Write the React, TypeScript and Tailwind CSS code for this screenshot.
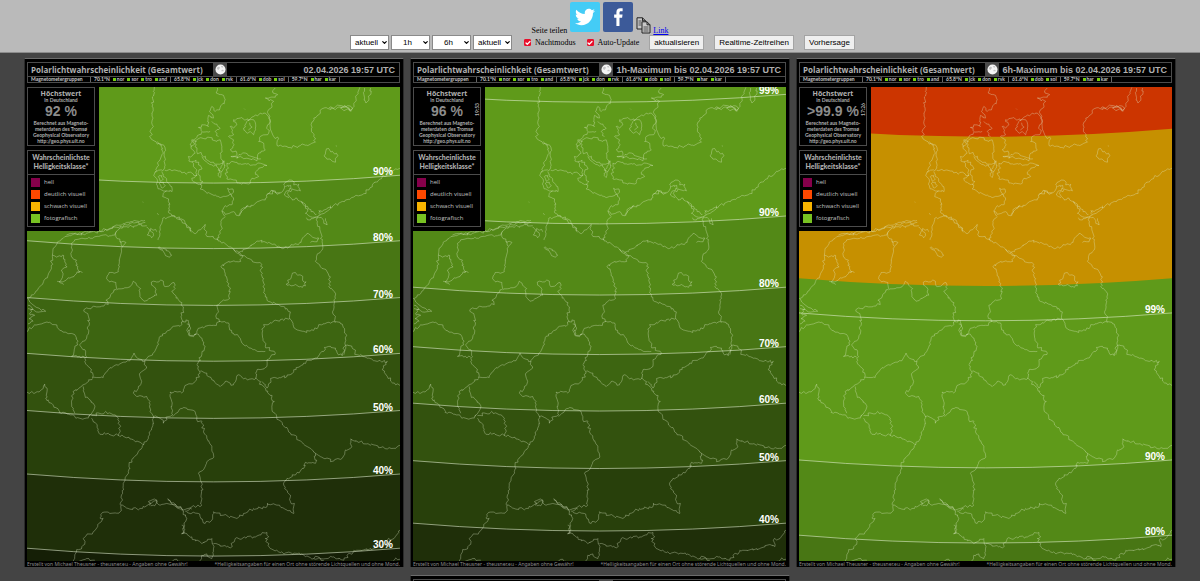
import { Check as CheckIcon, ChevronDown } from "lucide-react";

type Band = { edge: number; color: string; label?: string };
type MapData = { period: string; value: string; time?: string; top: string; bands: Band[] };

const LEFT = 22;
const TOP = 7;
const WIDTH = 1116;
const HEIGHT = 1419;
const SAG = 47;

const greens = {
  g90: "#5f9a1a",
  g80: "#538917",
  g70: "#487614",
  g60: "#3d6511",
  g50: "#33520e",
  g40: "#28400b",
  g30: "#1f2f09",
  g20: "#151f06",
};

const maps: MapData[] = [
  {
    period: "02.04.2026 19:57 UTC",
    value: "92 %",
    top: greens.g90,
    bands: [
      { edge: 271, color: greens.g80, label: "90%" },
      { edge: 467, color: greens.g70, label: "80%" },
      { edge: 637, color: greens.g60, label: "70%" },
      { edge: 804, color: greens.g50, label: "60%" },
      { edge: 975, color: greens.g40, label: "50%" },
      { edge: 1165, color: greens.g30, label: "40%" },
      { edge: 1387, color: greens.g20, label: "30%" },
    ],
  },
  {
    period: "1h-Maximum bis 02.04.2026 19:57 UTC",
    value: "96 %",
    time: "19:53",
    top: greens.g90,
    bands: [
      { edge: 29, color: greens.g90, label: "99%" },
      { edge: 393, color: greens.g80, label: "90%" },
      { edge: 606, color: greens.g70, label: "80%" },
      { edge: 784, color: greens.g60, label: "70%" },
      { edge: 953, color: greens.g50, label: "60%" },
      { edge: 1125, color: greens.g40, label: "50%" },
      { edge: 1312, color: greens.g30, label: "40%" },
    ],
  },
  {
    period: "6h-Maximum bis 02.04.2026 19:57 UTC",
    value: ">99.9 %",
    time: "17:26",
    top: "#cc3500",
    bands: [
      { edge: 132, color: "#c69000" },
      { edge: 579, color: greens.g90 },
      { edge: 683, color: greens.g90, label: "99%" },
      { edge: 1123, color: greens.g80, label: "90%" },
      { edge: 1348, color: greens.g70, label: "80%" },
    ],
  },
];

const north: string[] = [
  "403,7 400,20 398,60 399,100 396,130 391,158 402,168 412,178 430,180 434,200 436,225 434,250 428,258 415,256 405,262 404,275",
  "412,170 424,185 428,200 420,225 412,245 405,262",
  "434,256 460,256 485,264 498,268 512,262 530,272",
  "404,275 412,285 410,300 420,312 440,318 456,320 455,305 440,290 430,275 425,260",
  "415,275 425,272 430,282 420,288 415,275",
  "418,295 430,292 436,302 424,308 418,295",
  "440,318 430,325 428,335 440,340 445,350 448,365 445,380 455,392 465,398",
  "428,400 450,395 470,398 485,402 495,412 505,425 515,438 525,446 535,435 545,430 555,418 552,430 560,440 558,450 570,455 585,462 600,468 620,480 640,492 655,505 668,512",
  "468,400 484,405 494,415 504,428 514,441",
  "428,400 422,420 418,440 416,465",
  "380,425 390,435 382,450 395,458 400,445 392,430 410,440",
  "415,487 430,490 445,498 455,510 448,516 435,508 425,495 415,487",
  "375,406 350,408 320,412 290,420 270,430 235,438 200,440 160,448 130,460 112,472 100,490 98,510 95,540 85,570 65,600 45,625 25,640",
  "140,450 200,445 260,436 300,424 340,414 376,412",
  "380,420 350,422 320,425 300,428 290,438 285,450 270,452 250,450 225,455 190,460 165,464 155,475 158,495 155,515 170,525 168,540 180,560 165,570 145,578 130,590 112,588",
  "98,510 110,516 128,510 135,530 142,545 125,555 128,575 118,590 132,598",
  "175,562 188,562",
  "290,440 288,455 300,470 318,472 308,482",
  "300,470 308,485 302,510 298,535 290,562 268,562 260,580 270,590 288,592 290,610 275,625 258,645 265,658 230,665 200,668 192,678 205,690 208,720 202,750 200,760 180,778 195,793 200,813 195,828 210,848 218,878",
  "290,615 310,610 330,605 340,588 350,600 362,610 360,630 372,648 390,640 410,630 408,612 395,600 400,588 430,588 432,602 450,600 462,592 465,610 455,618 468,632 480,650 490,665 485,690 490,710 505,706 508,720 500,735 510,750 530,746",
  "592,10 588,25 610,32 613,50 600,68 585,80 575,65 568,80 578,90 580,100 565,92 562,110 565,125 545,120 535,128 548,142 570,140",
  "575,110 590,118 600,130 585,140 595,155",
  "545,142 530,158 515,165 510,180 518,195 525,205 505,215 510,230 520,245 530,255 530,272 515,280 525,292 545,300 540,312 560,325 585,330 600,338 625,332 640,322 638,312 622,310 630,325 640,345 632,360 615,362 605,378 615,388 640,380 655,392 665,378 685,365 705,355 735,345 738,330 765,318 770,328 788,318",
  "515,230 528,226 535,240 545,250 535,262 540,280 548,290 540,300",
  "512,185 524,178 518,168 530,170",
  "655,390 662,374 684,361",
  "740,328 752,316 780,322",
  "788,318 790,300 800,290 815,286 820,300 835,298 840,318 815,312 800,325 815,345 830,340 845,350 862,372 855,385 870,395 890,400 900,390 895,375",
  "795,305 810,300 812,312 798,318 792,330 806,338",
  "842,352 856,364 872,380 888,388",
  "900,388 925,375 930,362",
  "915,400 920,420 910,415 905,400 890,395 870,405 858,398",
  "895,382 920,370 960,352 1000,336 1030,326 1045,315 1055,300 1080,282 1105,265 1125,252 1138,250",
  "530,165 560,158 590,170 600,165 605,185 602,210 608,235 598,238 580,232 560,225 545,210 530,200 528,180 530,165",
  "612,228 612,250 600,278 595,270 602,250 612,228",
  "545,215 558,230 575,240 590,246 604,262",
  "640,150 625,155 640,165 638,185 630,195 650,205 650,220 632,215 660,215 680,220 710,228 712,210 735,195 730,175 715,170 720,155 745,145 742,120 750,105 735,85 720,85 700,95 685,108 660,100 640,105 650,120 640,130 630,125 640,150",
  "680,110 700,105 705,130 700,150 690,140 680,145 670,130 680,110",
  "688,114 694,128 684,136",
  "625,250 620,235 650,232 680,238 700,240 720,235 740,242 715,250 705,262 715,275 695,280 690,295 665,298 640,285 620,282 615,265 625,250",
  "655,212 668,204 684,212 698,216 722,222",
  "765,10 758,25 772,30 750,38 735,40 760,50 755,65 742,80 748,105 750,130 760,155 775,162 770,182 810,188 840,182 870,178 885,172 880,155 873,140 872,120 880,100 900,85 905,72 940,72 965,68 985,72 992,78 1000,60 1010,30 1018,8",
  "925,70 945,66 955,62 990,64 995,72 970,78 960,70 980,68 992,80",
  "1032,10 1030,30 1036,55 1045,40 1050,10",
  "918,192 950,210 945,232 912,215 918,192",
  "640,492 655,502 685,488 710,468 745,472 770,485 790,490 820,480 842,472 850,455 860,445 875,455 895,462 890,470 870,472",
  "605,378 615,395 602,410 606,430 600,445 592,465",
  "890,400 890,415 900,440 905,470 905,495 888,515 886,530 900,545 920,560 930,575 925,595 930,610 942,620 943,650 936,680 944,695 946,710",
  "668,512 655,530 620,532 602,545 615,565 620,590 630,610 628,640 600,652 590,660 595,680 588,695 598,710",
  "655,500 668,512 695,525 725,538 722,560 730,580 728,605 735,635 750,650 775,658 800,670 810,680 808,700 780,703 750,712 730,718 726,740 728,760 735,783",
  "808,700 820,725 835,735 850,738 880,735 895,718 920,712 945,710 960,715 972,730 975,745 974,770 970,808",
  "800,600 802,585 812,580 815,568 825,562 832,570 845,572 848,588 857,590 855,602 840,604 825,598 812,602 800,600",
  "22,638 30,650 60,670 78,678 50,680 25,670",
  "25,660 40,672 30,684 45,690 28,700 40,708 25,716",
  "22,738 45,718 65,716 85,712 105,718 120,735 145,745 165,748 175,768 165,788 155,813 195,816",
  "368,351 370,352",
  "411,385 416,389",
  "448,374 450,377",
  "672,72 674,74",
  "946,183 949,184",
];

const south: string[] = [
  "218,170 250,168 265,145 290,130 330,118 342,95 352,110 375,120 380,140 360,155 365,180 355,200 340,215 350,225 380,225 390,240 392,265 400,290 395,320 385,345 372,368 355,390 335,415 325,450 310,485 308,515 303,550",
  "22,212 45,215 65,205 75,188 82,200 78,230 100,250 125,275 160,280 168,290 205,290 210,280",
  "165,275 155,240 160,210 185,195 218,172",
  "190,195 195,220 220,245 222,265 207,285",
  "215,282 260,272 285,280 298,300 300,325 295,342 265,335 240,338 232,310 215,290",
  "295,340 330,352 372,368",
  "490,0 485,10 460,15 440,30 420,45 415,70 405,90 385,105 375,120",
  "500,8 512,20 505,40 520,46 530,34 540,20 555,15 580,12 600,0",
  "530,38 545,50 555,75 545,100 530,130 540,155 525,180 500,190 490,210 450,212 455,240 458,280 445,285 430,305 420,290 400,285",
  "458,285 480,262 500,260 525,270 530,295 545,300 550,330 560,350 575,380 578,410 560,420 555,435 535,455 545,490 545,530 545,550 515,555 495,568",
  "540,150 560,155 575,175 600,195 615,180 640,190 655,160 670,172 705,172 710,145 740,135 740,115 765,95 735,75",
  "735,90 700,85 665,65 655,45 635,35 625,5 600,0",
  "705,170 725,190 735,200 762,240 755,265 775,295 795,318 820,340 850,368 870,380 885,395 885,425 855,422 850,440 825,460 800,470 790,490 810,520 812,545 822,545 820,575 800,565 770,550 740,545 740,555 700,560 670,575 650,590 610,580 580,570 575,595 555,605 535,575 500,570",
  "725,180 740,200 755,170 800,165 820,145 850,125 885,110 910,90 912,78 930,75 945,80 950,95 965,103 975,72 995,80 1010,100 1045,110 1070,120 1100,120 1085,145 1100,165 1125,190 1138,192",
  "885,395 910,410 940,418 965,410 975,385 990,380 990,352 1020,360 1060,370 1100,382 1125,380 1138,372",
  "303,550 330,562 360,560 390,550 385,540 405,533 415,548 440,545 460,548 490,565",
  "388,545 400,538 412,540 404,552 392,552",
  "443,530 460,543 475,556 495,563 515,562",
  "443,534 458,548 474,560 492,570",
  "303,550 300,570 270,575 248,572 240,588 250,590 220,630 195,645 190,670 170,690 160,718",
  "490,570 500,590 485,635 515,645 545,665 575,650 580,680 575,710 560,696 545,700 538,718",
  "485,610 494,622 492,634 484,636",
  "580,665 630,678 645,650 700,645 740,632 745,645 735,650 750,680 780,692 840,698 880,710 940,705 970,715 1000,685 1060,680 1090,668 1105,674 1100,655 1120,650 1138,625",
  "178,718 200,710 225,715",
  "480,718 470,712 455,718",
  "880,710 890,704 910,716",
  "1110,718 1125,708 1138,712",
];

/* Subdivides a coarse outline with small repeatable offsets so that it reads as a coast or river. */
function outline(points: string, shift: number): string {
  let seed = points.length * 7919 + points.charCodeAt(0);
  const random = () => {
    seed = (seed * 1103515245 + 12345) % 2147483648;
    return seed / 2147483648 - 0.5;
  };
  const coords = points.split(" ").map((p) => p.split(",").map(Number));
  const out: string[] = [];
  coords.forEach(([x, y], i) => {
    if (i > 0) {
      const [px, py] = coords[i - 1];
      const length = Math.hypot(x - px, y - py);
      const steps = Math.max(1, Math.round(length / 6));
      for (let s = 1; s < steps; s++) {
        const t = s / steps;
        out.push(
          `${(px + (x - px) * t + random() * 8).toFixed(1)},${(py + (y - py) * t + random() * 8 + shift).toFixed(1)}`,
        );
      }
    }
    out.push(`${x},${y + shift}`);
  });
  return "M" + out.join("L");
}

const borders = [...north.map((p) => outline(p, 0)), ...south.map((p) => outline(p, 708))].join("");

function arc(edge: number) {
  return `M${LEFT},${edge}Q${LEFT + WIDTH / 2},${edge + SAG} ${LEFT + WIDTH},${edge}`;
}

function AuroraMap({ data }: { data: MapData }) {
  return (
    <svg viewBox={`${LEFT} ${TOP} ${WIDTH} ${HEIGHT}`} className="block w-full" role="img" aria-label={data.period}>
      <rect x={LEFT} y={TOP} width={WIDTH} height={HEIGHT} fill={data.top} />
      {data.bands.map((b) => (
        <path key={b.edge} d={`${arc(b.edge)}V1430H${LEFT}Z`} fill={b.color} />
      ))}
      <path d={borders} fill="none" stroke="#e4f0d0" strokeOpacity="0.42" strokeWidth="2.4" strokeLinejoin="round" />
      {data.bands
        .filter((b) => b.label)
        .map((b) => (
          <g key={b.edge}>
            <path d={arc(b.edge)} fill="none" stroke="#e8f2d8" strokeOpacity="0.65" strokeWidth="2.6" />
            <text
              x="1117"
              y={b.edge}
              textAnchor="end"
              fill="#fff"
              fontSize="30"
              fontWeight="bold"
              fontFamily="Liberation Sans, Arial, sans-serif"
            >
              {b.label}
            </text>
          </g>
        ))}
    </svg>
  );
}

const stations = [
  { lat: "70.1°N", names: ["nor", "sor", "tro", "and"] },
  { lat: "65.8°N", names: ["jck", "don", "rvk"] },
  { lat: "61.6°N", names: ["dob", "sol"] },
  { lat: "59.7°N", names: ["har", "kar"] },
];

const classes = [
  { name: "hell", swatch: "bg-[#86004b]" },
  { name: "deutlich visuell", swatch: "bg-[#ff4800]" },
  { name: "schwach visuell", swatch: "bg-[#f8b400]" },
  { name: "fotografisch", swatch: "bg-[#78c222]" },
];

function Moon() {
  return (
    <span className="flex w-[14px] shrink-0 items-center justify-center self-stretch bg-[#4a4a4a]">
      <svg viewBox="0 0 24 24" className="size-[11px]" aria-hidden="true">
        <circle cx="12" cy="12" r="11" fill="#f4f4f4" />
        <path d="M4 9q2-4 5-3t1 4-3 3-3-4zM13 5q4-2 5 1t-4 1zM15 13q3-1 4 1t-3 2-1-3z" fill="#c4c4c4" />
      </svg>
    </span>
  );
}

function Panel({ data }: { data: MapData }) {
  return (
    <section className="flex w-[380px] flex-col border border-b-0 border-[#2b2b2b] border-t-[#6c6c6c] bg-black pt-[3px] pr-[3px] pl-[2px] font-['Lato',sans-serif] text-[#b0b0b0]">
      <header className="flex h-[15px] items-center border border-[#4c4c4c] pr-[4px] pl-[3px]">
        <h2 className="w-[182px] font-['Open_Sans',sans-serif] text-[8px] leading-[12px] font-bold whitespace-nowrap">
          Polarlichtwahrscheinlichkeit (Gesamtwert)
        </h2>
        <Moon />
        <p className="ml-auto font-['Liberation_Sans',Arial,sans-serif] text-[9px] leading-[12px] font-bold whitespace-nowrap">
          {data.period}
        </p>
      </header>
      <div className="flex h-[6px] items-center border border-t-0 border-[#4c4c4c] pl-[3px] text-[5px] leading-[5px] font-bold text-[#c8c8c8]">
        <span className="w-[59px]">Magnetometergruppen</span>
        {stations.map((group) => (
          <span key={group.lat} className="flex items-center gap-[3px] border-l border-[#666] px-[3px]">
            <span>{group.lat}</span>
            {group.names.map((name) => (
              <span key={name} className="flex items-center gap-px">
                <i className="size-[3px] bg-[#78d010]" />
                {name}
              </span>
            ))}
          </span>
        ))}
        <span className="h-[5px] border-l border-[#666]" />
      </div>
      <div className="relative mt-[4px]">
        <AuroraMap data={data} />
        <div className="absolute top-0 left-0 flex w-[72px] flex-col gap-[4px] bg-black pr-[4px] pb-[4px]">
          <div className="relative flex h-[59px] flex-col items-center border border-[#4c4c4c] pt-[2px] text-center">
            <h3 className="font-['Open_Sans',sans-serif] text-[7px] leading-[8px] font-bold">Höchstwert</h3>
            <p className="text-[5px] leading-[5px] font-bold">in Deutschland</p>
            <p className="font-['Liberation_Sans',Arial,sans-serif] text-[14px] leading-[17px] font-bold whitespace-nowrap text-[#8c8c8c]">
              {data.value}
            </p>
            <p className="text-[5px] leading-[6px] font-bold whitespace-nowrap">
              Berechnet aus Magneto-
              <br />
              meterdaten des Tromsø
              <br />
              Geophysical Observatory
              <br />
              http://geo.phys.uit.no
            </p>
            {data.time && (
              <span className="absolute top-[15px] right-0 rotate-180 text-[5px] leading-[5px] font-bold [writing-mode:vertical-rl]">
                {data.time}
              </span>
            )}
          </div>
          <div className="flex h-[77px] flex-col border border-[#4c4c4c]">
            <h3 className="border-b border-[#4c4c4c] pt-[2px] pb-[3px] text-center text-[7px] leading-[9px] font-black whitespace-nowrap">
              Wahrscheinlichste
              <br />
              Helligkeitsklasse*
            </h3>
            <ul className="flex flex-col gap-[3px] pt-[3px] pl-[3px]">
              {classes.map((c) => (
                <li
                  key={c.name}
                  className="flex h-[9px] items-center gap-[4px] font-['Open_Sans',sans-serif] text-[6px] leading-[9px] whitespace-nowrap text-[#c0c0c0]"
                >
                  <i className={`size-[9px] ${c.swatch}`} />
                  {c.name}
                </li>
              ))}
            </ul>
          </div>
        </div>
      </div>
      <footer className="flex h-[6px] justify-between overflow-hidden font-['Noto_Sans',sans-serif] text-[5px] leading-[6px] whitespace-nowrap text-[#8c8c8c]">
        <span>Erstellt von Michael Theusner - theusner.eu - Angaben ohne Gewähr!</span>
        <span>*Helligkeitsangaben für einen Ort ohne störende Lichtquellen und ohne Mond.</span>
      </footer>
    </section>
  );
}

function Picker({ label, value }: { label: string; value: string }) {
  return (
    <label className="relative flex h-[15px] w-[39px] items-center">
      <select
        aria-label={label}
        className="size-full appearance-none border border-[#8a8a8a] bg-white pr-[9px] pl-[3px] text-center font-['Liberation_Sans',Arial,sans-serif] text-[8px] leading-[13px] text-black"
      >
        <option>{value}</option>
      </select>
      <ChevronDown className="pointer-events-none absolute right-[1px] size-[7px] text-black" strokeWidth={4} />
    </label>
  );
}

function Check({ label }: { label: string }) {
  return (
    <label className="flex items-center gap-[4px]">
      <span className="relative flex size-[7px] items-center justify-center">
        <input
          type="checkbox"
          defaultChecked
          className="peer size-[7px] appearance-none rounded-[1px] border border-[#e8102c] bg-white checked:bg-[#e8102c]"
        />
        <CheckIcon className="pointer-events-none absolute hidden size-[6px] text-white peer-checked:block" strokeWidth={5} />
      </span>
      {label}
    </label>
  );
}

const buttonClass =
  "h-[15px] border border-[#a4a4a4] bg-[#efefef] px-[4px] font-['Liberation_Sans',Arial,sans-serif] text-[8px] leading-[13px] whitespace-nowrap text-black";

export default function App() {
  return (
    <div className="h-screen overflow-y-auto bg-[#444] [scrollbar-width:none]">
      <div className="flex flex-col items-center border-b border-[#8c8c8c] bg-[#bababa] pt-[2px] pb-[2px] font-['Liberation_Serif',serif] text-[8px] leading-[9px] text-black">
        <div className="flex h-[33px] items-end gap-[3px]">
          <span>Seite teilen</span>
          <a href="#twitter" aria-label="Twitter" className="mb-[3px] flex size-[30px] items-center justify-center rounded-[2px] bg-[#44ccf6]">
            <svg viewBox="0 0 24 24" className="size-[20px]" fill="#fff" aria-hidden="true">
              <path d="M23.954 4.569c-.885.389-1.83.654-2.825.775 1.014-.611 1.794-1.574 2.163-2.723-.951.555-2.005.959-3.127 1.184-.896-.959-2.173-1.559-3.591-1.559-2.717 0-4.92 2.203-4.92 4.917 0 .39.045.765.127 1.124C7.691 8.094 4.066 6.13 1.64 3.161c-.427.722-.666 1.561-.666 2.475 0 1.71.87 3.213 2.188 4.096-.807-.026-1.566-.248-2.228-.616v.061c0 2.385 1.693 4.374 3.946 4.827-.413.111-.849.171-1.296.171-.314 0-.615-.03-.916-.086.631 1.953 2.445 3.377 4.604 3.417-1.68 1.319-3.809 2.105-6.102 2.105-.39 0-.779-.023-1.17-.067 2.189 1.394 4.768 2.209 7.557 2.209 9.054 0 13.999-7.496 13.999-13.986 0-.209 0-.42-.015-.63.961-.689 1.8-1.56 2.46-2.548z" />
            </svg>
          </a>
          <a href="#facebook" aria-label="Facebook" className="mb-[3px] flex size-[30px] items-center justify-center rounded-[2px] bg-[#3c5a99]">
            <svg viewBox="0 0 12 24" className="h-[18px] w-[9px]" fill="#fff" aria-hidden="true">
              <path d="M3.2 24V13H.2V8.8h3V5.6C3.2 2 5.2.2 8.4.2c1.4 0 2.7.1 3.1.2v3.8H9.3c-1.7 0-2 .8-2 2v2.6h4.1L10.8 13H7.3v11z" />
            </svg>
          </a>
          <a href="#link" className="flex items-end text-[#0000ee] underline">
            <svg viewBox="0 0 15 17" className="mr-[2px] mb-px h-[17px] w-[15px]" fill="#c8c8c8" stroke="#222" strokeWidth="1" aria-hidden="true">
              <path d="M1 .8h5.5l3 3V12H1zM6.5 .8v3h3" />
              <path d="M2.5 4h3M2.5 6h3M2.5 8h3" strokeWidth=".7" />
              <path d="M6 4.8h5l3 3V16H6zM11 4.8v3h3" />
              <path d="M7.5 10h5M7.5 12h5M7.5 14h5" strokeWidth=".7" />
            </svg>
            Link
          </a>
        </div>
        <div className="flex h-[15px] items-center pl-[5px]">
          <div className="flex gap-[2px]">
            <Picker label="Karte 1" value="aktuell" />
            <Picker label="Karte 2" value="1h" />
            <Picker label="Karte 3" value="6h" />
            <Picker label="Karte 4" value="aktuell" />
          </div>
          <div className="ml-[12px] flex gap-[11px]">
            <Check label="Nachtmodus" />
            <Check label="Auto-Update" />
          </div>
          <div className="ml-[10px] flex gap-[10px]">
            <button type="button" className={buttonClass}>aktualisieren</button>
            <button type="button" className={buttonClass}>Realtime-Zeitreihen</button>
            <button type="button" className={buttonClass}>Vorhersage</button>
          </div>
        </div>
      </div>
      <main className="flex flex-wrap justify-center gap-x-[6px] gap-y-[8px] pt-[5px]">
        {maps.map((m) => (
          <Panel key={m.period} data={m} />
        ))}
        <Panel data={maps[0]} />
      </main>
    </div>
  );
}
